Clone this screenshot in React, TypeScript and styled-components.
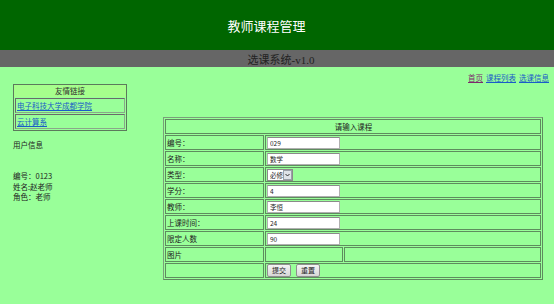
import React from 'react';
import styled, { createGlobalStyle } from 'styled-components';

const GlobalStyle = createGlobalStyle`
  body {
    margin: 0;
    background: #99ff99;
    font-family: "Noto Sans CJK SC", "DejaVu Sans", sans-serif;
    color: #222;
  }
`;

const Header = styled.header`
  height: 50px;
  background: #006600;
  color: #fff;
  display: flex;
  align-items: center;
  justify-content: center;
  font-size: 13px;
  padding-right: 21px;
  padding-top: 1px;
  box-sizing: border-box;
`;

const SubBar = styled.div`
  height: 17px;
  background: #666666;
  color: #222;
  display: flex;
  align-items: center;
  justify-content: center;
  font-family: "Liberation Serif", "Noto Sans CJK SC", serif;
  font-size: 11px;
  padding-left: 8px;
`;

const NavRow = styled.nav`
  display: flex;
  justify-content: flex-end;
  gap: 3px;
  padding: 5px 5px 0 0;
  height: 12px;
  font-size: 7.5px;
  line-height: 12px;
`;

const Link = styled.a<{ $visited?: boolean }>`
  color: ${(p) => (p.$visited ? '#7d2a6d' : '#1a5cc8')};
  text-decoration: underline;
`;

const Main = styled.div`
  display: flex;
  align-items: flex-start;
`;

const Side = styled.aside`
  width: 114px;
  margin-left: 13px;
  margin-top: 0;
  font-size: 7.5px;
`;

const LinkBox = styled.div`
  border: 1px solid #5c7a5c;
  display: flex;
  flex-direction: column;
  gap: 1px;
  padding-bottom: 1px;
`;

const LinkBoxHead = styled.div`
  height: 12px;
  line-height: 12px;
  text-align: center;
  background: #a6ff8c;
  color: #333;
`;

const LinkCell = styled.div`
  margin: 0 1px;
  height: 13px;
  line-height: 13px;
  border: 1px solid #6a6a6a;
  border-right-color: #8aa88a;
  border-bottom-color: #8aa88a;
  padding-left: 1px;
`;

const UserTitle = styled.div`
  margin-top: 9px;
  line-height: 10.4px;
`;

const UserLines = styled.div`
  margin-top: 21px;
  line-height: 10.4px;
`;

const FormTable = styled.table`
  margin-left: 36px;
  margin-top: 33px;
  width: 380px;
  border: 1px solid #7a9f7a;
  border-right-color: #5e8a5e;
  border-bottom-color: #5e8a5e;
  border-spacing: 1px;
  font-size: 7.5px;
  color: #222;
`;

const Cell = styled.td<{ $center?: boolean; $w?: number }>`
  box-sizing: border-box;
  height: 15px;
  padding: 0 0 0 1px;
  border: 1px solid #5e8c5e;
  text-align: ${(p) => (p.$center ? 'center' : 'left')};
  width: ${(p) => (p.$w ? `${p.$w}px` : 'auto')};
  vertical-align: middle;
  white-space: nowrap;
`;

const TextInput = styled.input`
  box-sizing: border-box;
  display: block;
  width: 73px;
  height: 12px;
  margin: 0;
  padding: 0 2px;
  border: 1px solid #b0b0b0;
  border-top-color: #8a8a8a;
  background: #fff;
  font-family: "Noto Sans CJK SC", sans-serif;
  font-size: 6.5px;
  color: #222;
  outline: none;
`;

const SelectWrap = styled.div`
  position: relative;
  width: 26px;
  height: 12px;
`;

const Select = styled.select`
  box-sizing: border-box;
  appearance: none;
  width: 26px;
  height: 12px;
  margin: 0;
  padding: 0 0 0 2px;
  border: 1px solid #8a8a8a;
  background: #fff;
  font-family: "Noto Sans CJK SC", sans-serif;
  font-size: 6.5px;
  color: #222;
`;

const SelectArrow = styled.span`
  position: absolute;
  right: 1px;
  top: 1px;
  width: 9px;
  height: 10px;
  box-sizing: border-box;
  background: #dfe3e8;
  border: 1px solid #9aa0a8;
  display: flex;
  align-items: center;
  justify-content: center;
  pointer-events: none;
`;

const Buttons = styled.div`
  display: flex;
  gap: 5px;
`;

const Button = styled.button`
  box-sizing: border-box;
  height: 13px;
  padding: 0 4px;
  margin: 0;
  border: 1px solid #8f8f8f;
  border-radius: 2px;
  background: linear-gradient(#f4f4f4, #d6d6d6);
  font-family: "Noto Sans CJK SC", sans-serif;
  font-size: 7px;
  line-height: 11px;
  color: #222;
`;

const fields = [
  { label: '编号：', value: '029' },
  { label: '名称：', value: '数学' },
  { label: '类型：', select: true },
  { label: '学分：', value: '4' },
  { label: '教师：', value: '李恒' },
  { label: '上课时间：', value: '24' },
  { label: '限定人数', value: '90' },
];

export default function App() {
  return (
    <>
      <GlobalStyle />
      <Header>教师课程管理</Header>
      <SubBar>选课系统-v1.0</SubBar>
      <NavRow>
        <Link $visited href="#">首页</Link>
        <Link href="#">课程列表</Link>
        <Link href="#">选课信息</Link>
      </NavRow>
      <Main>
        <Side>
          <LinkBox>
            <LinkBoxHead>友情链接</LinkBoxHead>
            <LinkCell><Link href="#">电子科技大学成都学院</Link></LinkCell>
            <LinkCell><Link href="#">云计算系</Link></LinkCell>
          </LinkBox>
          <UserTitle>用户信息</UserTitle>
          <UserLines>
            <div>编号：0123</div>
            <div>姓名:赵老师</div>
            <div>角色：老师</div>
          </UserLines>
        </Side>
        <FormTable>
          <tbody>
            <tr>
              <Cell colSpan={3} $center>请输入课程</Cell>
            </tr>
            {fields.map((f) => (
              <tr key={f.label}>
                <Cell $w={99}>{f.label}</Cell>
                <Cell colSpan={2}>
                  {f.select ? (
                    <SelectWrap>
                      <Select defaultValue="必修">
                        <option>必修</option>
                        <option>选修</option>
                      </Select>
                      <SelectArrow>
                        <svg width="5" height="4" viewBox="0 0 5 4">
                          <path d="M0.5 1 L2.5 3 L4.5 1" fill="none" stroke="#333" strokeWidth="1" />
                        </svg>
                      </SelectArrow>
                    </SelectWrap>
                  ) : (
                    <TextInput defaultValue={f.value} />
                  )}
                </Cell>
              </tr>
            ))}
            <tr>
              <Cell $w={99}>图片</Cell>
              <Cell $w={78}></Cell>
              <Cell></Cell>
            </tr>
            <tr>
              <Cell $w={99}></Cell>
              <Cell colSpan={2}>
                <Buttons>
                  <Button>提交</Button>
                  <Button>重置</Button>
                </Buttons>
              </Cell>
            </tr>
          </tbody>
        </FormTable>
      </Main>
    </>
  );
}
